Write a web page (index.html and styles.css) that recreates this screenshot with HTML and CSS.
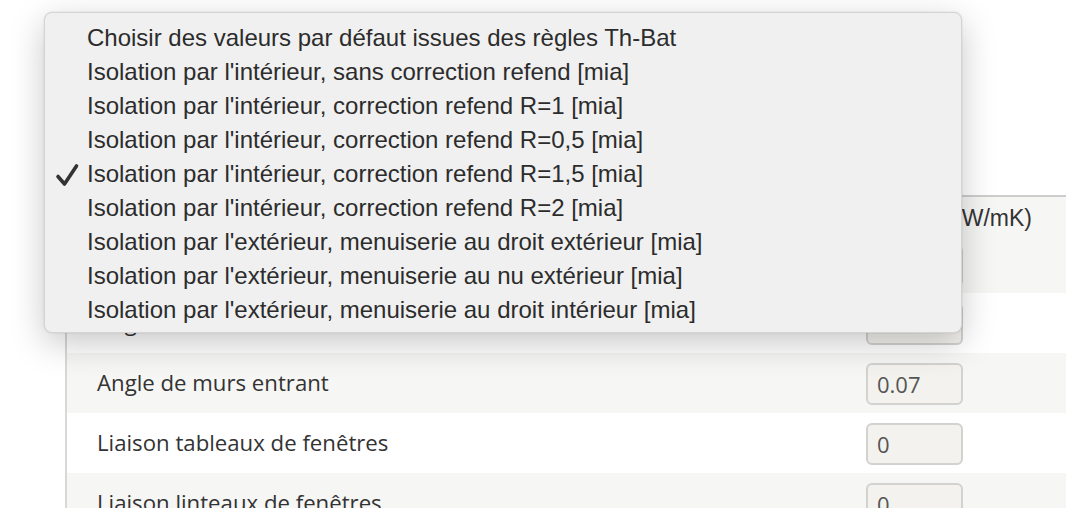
FILE: index.html
```html
<!DOCTYPE html>
<html lang="fr">
<head>
<meta charset="utf-8">
<title>Ponts thermiques</title>
<link rel="stylesheet" href="styles.css">
</head>
<body>
<div class="panel">
  <div class="row head">
    <div class="label"></div>
    <div class="cell">
      <div class="head-text">ψ (W/mK)</div>
      <div class="field"></div>
    </div>
  </div>
  <div class="row">
    <div class="label">Angle de murs sortant</div>
    <div class="cell"><div class="field">0.1</div></div>
  </div>
  <div class="row alt">
    <div class="label">Angle de murs entrant</div>
    <div class="cell"><div class="field">0.07</div></div>
  </div>
  <div class="row">
    <div class="label">Liaison tableaux de fenêtres</div>
    <div class="cell"><div class="field">0</div></div>
  </div>
  <div class="row alt">
    <div class="label">Liaison linteaux de fenêtres</div>
    <div class="cell"><div class="field">0</div></div>
  </div>
</div>

<div class="menu">
  <div class="item">Choisir des valeurs par défaut issues des règles Th-Bat</div>
  <div class="item">Isolation par l'intérieur, sans correction refend [mia]</div>
  <div class="item">Isolation par l'intérieur, correction refend R=1 [mia]</div>
  <div class="item">Isolation par l'intérieur, correction refend R=0,5 [mia]</div>
  <div class="item checked"><svg class="check" width="24" height="24" viewBox="0 0 24 24"><path d="M3 13.5 L9.5 21 L21.5 3" fill="none" stroke="#333" stroke-width="3.6" stroke-linecap="round" stroke-linejoin="round"/></svg>Isolation par l'intérieur, correction refend R=1,5 [mia]</div>
  <div class="item">Isolation par l'intérieur, correction refend R=2 [mia]</div>
  <div class="item">Isolation par l'extérieur, menuiserie au droit extérieur [mia]</div>
  <div class="item">Isolation par l'extérieur, menuiserie au nu extérieur [mia]</div>
  <div class="item">Isolation par l'extérieur, menuiserie au droit intérieur [mia]</div>
</div>
</body>
</html>
```

FILE: styles.css
```css
html, body {
  margin: 0;
  padding: 0;
  background: #ffffff;
}

body {
  width: 1066px;
  height: 508px;
  overflow: hidden;
  position: relative;
}

.panel {
  margin-left: 65px;
  margin-top: 195px;
  border-left: 2px solid #d8d8d8;
  border-top: 2px solid #cdcdcd;
  font-family: "Open Sans", "Noto Sans", sans-serif;
  color: #333333;
}

.row {
  display: grid;
  grid-template-columns: 799px 1fr;
  height: 60px;
  background: #ffffff;
}

.row.alt {
  background: #f6f6f4;
}

.row.head {
  height: 96px;
  background: #f6f6f4;
}

.label {
  padding-left: 30px;
  font-size: 22.2px;
  line-height: 60px;
  white-space: nowrap;
}

.cell {
  padding-top: 10px;
}

.head .cell {
  padding-top: 6px;
}

.head-text {
  font-family: "Liberation Sans", Arial, sans-serif;
  font-size: 23px;
  line-height: 30px;
  color: #333333;
  text-align: right;
  padding-right: 34px;
  white-space: nowrap;
  margin-bottom: 12px;
}

.field {
  box-sizing: border-box;
  width: 97px;
  height: 42px;
  border: 2px solid #d2d2cf;
  border-radius: 6px;
  background: #f3f2ee;
  padding-left: 9px;
  font-size: 22px;
  line-height: 38px;
  color: #555555;
}

.menu {
  position: absolute;
  left: 44px;
  top: 12px;
  width: 918px;
  height: 321px;
  box-sizing: border-box;
  padding-top: 8px;
  background: #f0f0f0;
  border: 1px solid #d4d4d4;
  border-radius: 8px;
  box-shadow: 0 10px 34px rgba(0, 0, 0, 0.22), 0 0 2px rgba(0, 0, 0, 0.12);
  font-family: "Liberation Sans", Arial, sans-serif;
  font-size: 24px;
  color: #2c2c2c;
}

.item {
  position: relative;
  height: 34px;
  line-height: 34px;
  padding-left: 42px;
  white-space: nowrap;
}

.check {
  position: absolute;
  left: 10px;
  top: 6px;
}
```
